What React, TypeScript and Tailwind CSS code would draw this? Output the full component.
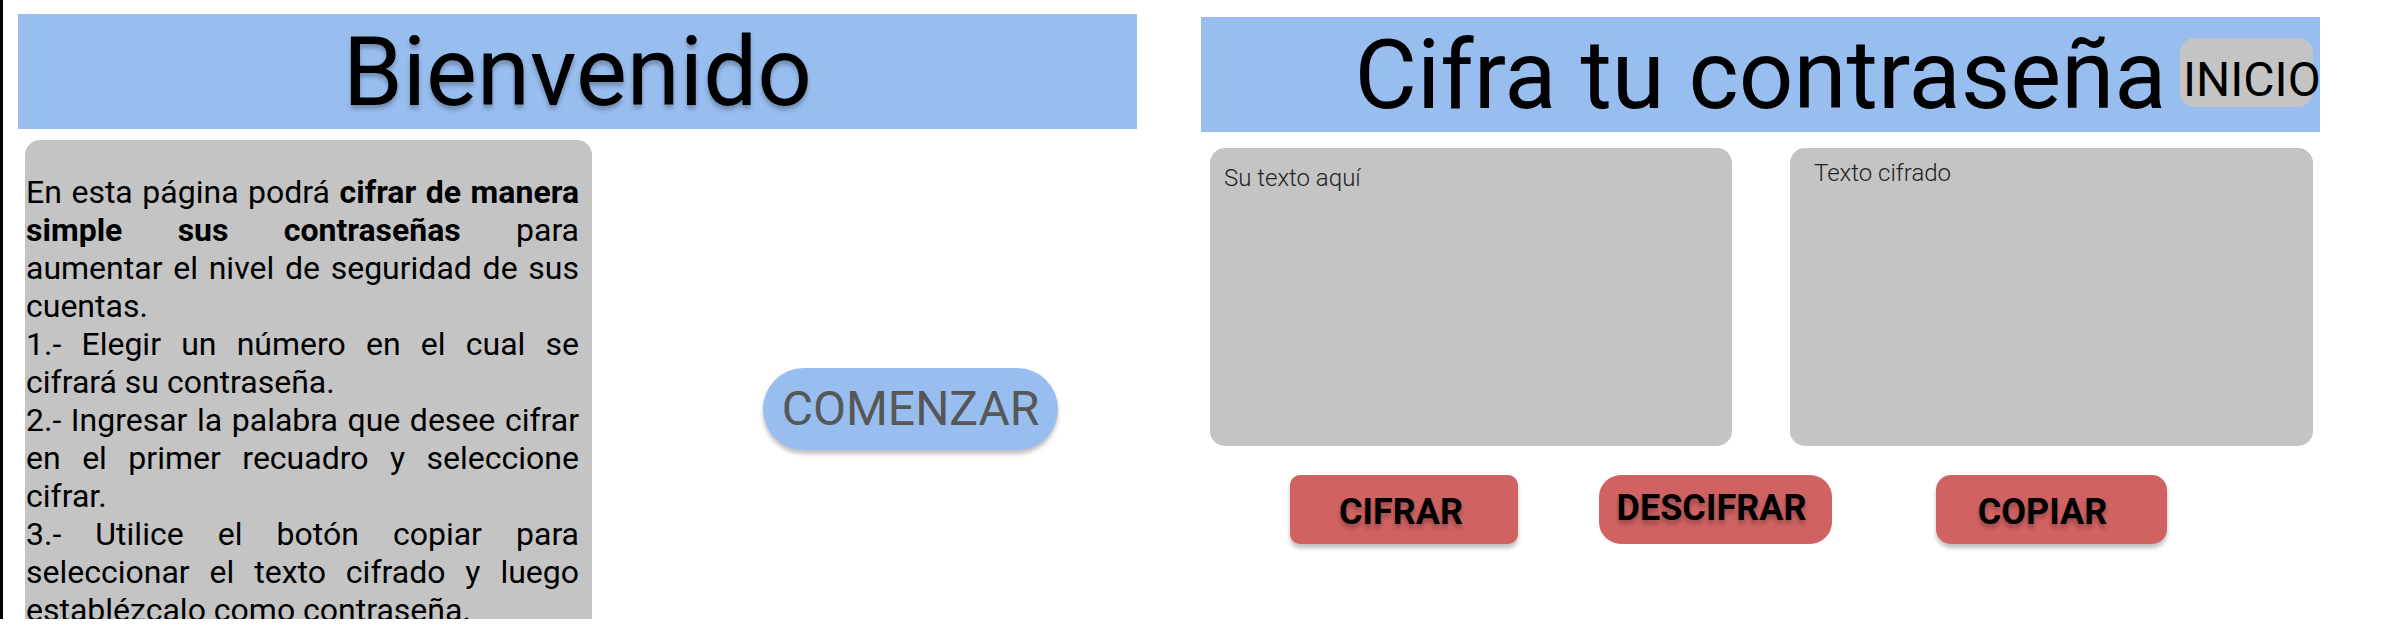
import React from "react";

const shadowText = "[text-shadow:0_4px_4px_rgba(0,0,0,0.25)]";

// Left frame: welcome panel
const Welcome: React.FC = () => {
  return (
    <div className="w-[1194px] h-[619px] shrink-0 border-l-[3px] border-black overflow-hidden pl-[15px] pt-[14px]">
      <header className="w-[1119px] h-[115px] bg-[#98bdef] flex items-center justify-center">
        <h1 className={`text-[96px] leading-[normal] text-black ${shadowText}`}>
          Bienvenido
        </h1>
      </header>
      <div className="flex mt-[11px]">
        <div className="ml-[7px] w-[567px] h-[600px] shrink-0 bg-[#c4c4c4] rounded-t-[15px] pt-[33px] pl-[1px] pr-[13px]">
          <p className="text-[32px] leading-[38px] text-black text-justify">
            En esta página podrá{" "}
            <b className="font-bold">cifrar de manera simple sus contraseñas</b>{" "}
            para aumentar el nivel de seguridad de sus cuentas.
            <br />
            1.- Elegir un número en el cual se cifrará su contraseña.
            <br />
            2.- Ingresar la palabra que desee cifrar en el primer recuadro y
            seleccione cifrar.
            <br />
            3.- Utilice el botón copiar para seleccionar el texto cifrado y
            luego establézcalo como contraseña.
          </p>
        </div>
        <div className="pl-[171px] pt-[228px]">
          <button className="w-[295px] h-[82px] rounded-full bg-[#98bdef] text-[48px] leading-none text-[#575757] shadow-[0_4px_4px_rgba(0,0,0,0.25)] flex items-center justify-center">
            COMENZAR
          </button>
        </div>
      </div>
    </div>
  );
};

// Right frame: cipher panel
const Cipher: React.FC = () => {
  return (
    <div className="flex-1 pl-[7px] pt-[17px]">
      <header className="relative w-[1119px] h-[115px] bg-[#98bdef] flex items-center justify-center">
        <h1 className="text-[96px] leading-[normal] text-black">
          Cifra tu contraseña
        </h1>
        <button className="absolute right-[7px] top-[21px] w-[133px] h-[69px] rounded-[15px] bg-[#c4c4c4] text-[48px] leading-[56px] text-black text-left whitespace-nowrap pl-[3px] pt-[14px] overflow-visible">
          <span className="block">INICIO</span>
        </button>
      </header>

      <div className="flex mt-[16px] pl-[9px] gap-[58px]">
        <div className="w-[522px] h-[298px] rounded-[15px] bg-[#c4c4c4] pl-[14px] pt-[16px] text-[24px] font-light leading-[28px] text-[#222]">
          Su texto aquí
        </div>
        <div className="w-[523px] h-[298px] rounded-[15px] bg-[#c4c4c4] pl-[24px] pt-[11px] text-[24px] font-light leading-[28px] text-[#222]">
          Texto cifrado
        </div>
      </div>

      <div className="flex mt-[29px] pl-[89px]">
        <button className={`w-[228px] h-[69px] rounded-[10px] bg-[#d06262] shadow-[0_4px_4px_rgba(0,0,0,0.25)] flex items-center justify-center pt-[4px] pr-[6px] text-[36px] font-bold text-black leading-none ${shadowText}`}>
          CIFRAR
        </button>
        <button className={`ml-[81px] w-[233px] h-[69px] rounded-[22px] bg-[#d06262] flex items-center justify-center pb-[4px] pr-[8px] text-[36px] font-bold text-black leading-none ${shadowText}`}>
          DESCIFRAR
        </button>
        <button className={`ml-[104px] w-[231px] h-[69px] rounded-[15px] bg-[#d06262] shadow-[0_4px_4px_rgba(0,0,0,0.25)] flex items-center justify-center pt-[4px] pr-[18px] text-[36px] font-bold text-black leading-none ${shadowText}`}>
          COPIAR
        </button>
      </div>
    </div>
  );
};

export default function App() {
  return (
    <div className="flex w-[2388px] h-[644px] bg-white font-['Roboto',sans-serif] overflow-hidden">
      <Welcome />
      <Cipher />
    </div>
  );
}
